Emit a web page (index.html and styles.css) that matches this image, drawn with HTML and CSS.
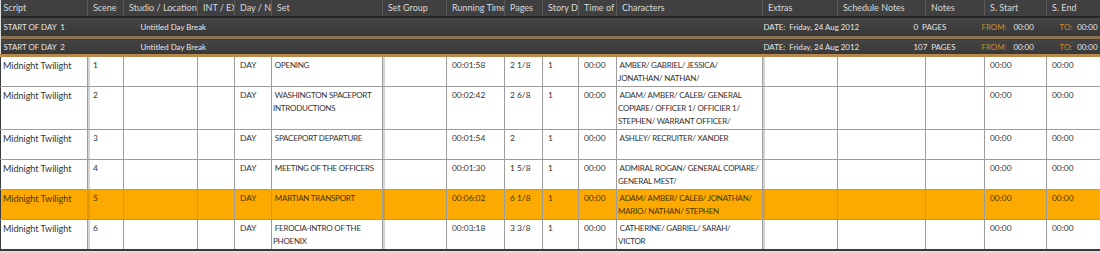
FILE: index.html
```html
<!DOCTYPE html>
<html lang="en">
<head>
    <meta charset="UTF-8">
    <title>Shooting Schedule</title>
    <link rel="stylesheet" href="styles.css">
</head>
<body>
    <table class="grid">
        <colgroup>
            <col style="width:87px"><col style="width:36px"><col style="width:74px"><col style="width:37px">
            <col style="width:37px"><col style="width:111px"><col style="width:64px"><col style="width:58px">
            <col style="width:38px"><col style="width:36px"><col style="width:38px"><col style="width:146px">
            <col style="width:75px"><col style="width:88px"><col style="width:59px"><col style="width:62px">
            <col style="width:54px">
        </colgroup>
        <thead>
            <tr class="head">
                <th class="first">Script</th><th>Scene</th><th>Studio / Location</th><th>INT / EXT</th>
                <th>Day / Night</th><th>Set</th><th>Set Group</th><th>Running Time</th><th>Pages</th>
                <th>Story Day</th><th>Time of Day</th><th>Characters</th><th>Extras</th>
                <th>Schedule Notes</th><th>Notes</th><th>S. Start</th><th>S. End</th>
            </tr>
        </thead>
        <tbody>
            <tr class="daybreak">
                <td colspan="17">
                    <div class="break">
                        <span class="b-title">START OF DAY&nbsp; 1</span>
                        <span class="b-name">Untitled Day Break</span>
                        <span class="b-date">DATE:&nbsp; Friday, 24 Aug 2012</span>
                        <span class="b-pages">0&nbsp; PAGES</span>
                        <span class="b-from"><em>FROM:</em>00:00</span>
                        <span class="b-to"><em>TO:</em>00:00</span>
                    </div>
                </td>
            </tr>
            <tr class="daybreak second">
                <td colspan="17">
                    <div class="break">
                        <span class="b-title">START OF DAY&nbsp; 2</span>
                        <span class="b-name">Untitled Day Break</span>
                        <span class="b-date">DATE:&nbsp; Friday, 24 Aug 2012</span>
                        <span class="b-pages">107&nbsp; PAGES</span>
                        <span class="b-from"><em>FROM:</em>00:00</span>
                        <span class="b-to"><em>TO:</em>00:00</span>
                    </div>
                </td>
            </tr>
            <tr class="scene">
                <td class="first">Midnight Twilight</td><td class="num">1</td><td></td><td></td><td class="num">DAY</td>
                <td class="cap">&nbsp;OPENING</td><td></td><td class="num">00:01:58</td><td class="num">2 1/8</td><td class="num">1</td><td class="num">00:00</td>
                <td class="cap">&nbsp;AMBER/ GABRIEL/ JESSICA/ JONATHAN/ NATHAN/</td>
                <td></td><td></td><td></td><td class="num">00:00</td><td class="num">00:00</td>
            </tr>
            <tr class="scene">
                <td class="first">Midnight Twilight</td><td class="num">2</td><td></td><td></td><td class="num">DAY</td>
                <td class="cap">&nbsp;WASHINGTON SPACEPORT INTRODUCTIONS</td><td></td><td class="num">00:02:42</td><td class="num">2 6/8</td><td class="num">1</td><td class="num">00:00</td>
                <td class="cap">&nbsp;ADAM/ AMBER/ CALEB/ GENERAL COPIARE/ OFFICER 1/ OFFICIER 1/ STEPHEN/ WARRANT OFFICER/</td>
                <td></td><td></td><td></td><td class="num">00:00</td><td class="num">00:00</td>
            </tr>
            <tr class="scene">
                <td class="first">Midnight Twilight</td><td class="num">3</td><td></td><td></td><td class="num">DAY</td>
                <td class="cap">&nbsp;SPACEPORT DEPARTURE</td><td></td><td class="num">00:01:54</td><td class="num">2</td><td class="num">1</td><td class="num">00:00</td>
                <td class="cap">&nbsp;ASHLEY/ RECRUITER/ XANDER</td>
                <td></td><td></td><td></td><td class="num">00:00</td><td class="num">00:00</td>
            </tr>
            <tr class="scene">
                <td class="first">Midnight Twilight</td><td class="num">4</td><td></td><td></td><td class="num">DAY</td>
                <td class="cap">&nbsp;MEETING OF THE OFFICERS</td><td></td><td class="num">00:01:30</td><td class="num">1 5/8</td><td class="num">1</td><td class="num">00:00</td>
                <td class="cap">&nbsp;ADMIRAL ROGAN/ GENERAL COPIARE/ GENERAL MEST/</td>
                <td></td><td></td><td></td><td class="num">00:00</td><td class="num">00:00</td>
            </tr>
            <tr class="scene selected">
                <td class="first">Midnight Twilight</td><td class="num">5</td><td></td><td></td><td class="num">DAY</td>
                <td class="cap">&nbsp;MARTIAN TRANSPORT</td><td></td><td class="num">00:06:02</td><td class="num">6 1/8</td><td class="num">1</td><td class="num">00:00</td>
                <td class="cap">&nbsp;ADAM/ AMBER/ CALEB/ JONATHAN/ MARIO/ NATHAN/ STEPHEN</td>
                <td></td><td></td><td></td><td class="num">00:00</td><td class="num">00:00</td>
            </tr>
            <tr class="scene">
                <td class="first">Midnight Twilight</td><td class="num">6</td><td></td><td></td><td class="num">DAY</td>
                <td class="cap">&nbsp;FEROCIA-INTRO OF THE PHOENIX</td><td></td><td class="num">00:03:18</td><td class="num">3 3/8</td><td class="num">1</td><td class="num">00:00</td>
                <td class="cap">&nbsp;CATHERINE/ GABRIEL/ SARAH/<br>VICTOR</td>
                <td></td><td></td><td></td><td class="num">00:00</td><td class="num">00:00</td>
            </tr>
        </tbody>
    </table>
</body>
</html>
```

FILE: styles.css
```css
body{
    margin: 0;
    background: #dcdcdc;
    font-family: Lato, "Liberation Sans", sans-serif;
    font-size: 9px;
}
.grid{
    width: 1100px;
    border-collapse: collapse;
    table-layout: fixed;
    border-bottom: 2px solid #3a3a3a;
}
.grid th, .grid td{
    overflow: hidden;
    padding: 0;
}

/* header */
.head th{
    height: 15px;
    background: #404040;
    color: #d8d8d8;
    font-weight: normal;
    text-align: left;
    white-space: nowrap;
    padding: 0 2px 1px 5px;
    border-right: 1px solid #5a5a5a;
    border-bottom: 2px solid #262626;
}
.head th.first{
    padding-left: 3px;
}

/* day breaks */
.daybreak td{
    background: linear-gradient(#454545, #383838);
    color: #e6e6e6;
    font-size: 7.9px;
    height: 18px;
    border-bottom: 3px solid #8c7250;
}
.daybreak.second td{
    height: 15px;
    border-bottom: 3px solid #b8894a;
}
.break{
    display: flex;
    align-items: center;
    white-space: nowrap;
}
.break span{
    flex-shrink: 0;
}
.b-title{
    width: 140px;
    padding-left: 3px;
    box-sizing: border-box;
}
.b-name{
    width: 623px;
}
.b-date{
    width: 150px;
}
.b-pages{
    width: 68px;
}
.b-to{
    margin-left: auto;
    padding-right: 3px;
}
.break em{
    font-style: normal;
    color: #c88f2c;
    margin-right: 5px;
}
.b-from em{
    margin-right: 7px;
}

/* scene rows */
.scene td{
    height: 30px;
    background: #fff;
    color: #333;
    vertical-align: top;
    line-height: 13px;
    padding: 2px 2px 1px 5px;
    border-right: 1px solid #9c9c9c;
    border-bottom: 1px solid #9c9c9c;
    box-sizing: border-box;
}
.scene td.first{
    padding-left: 2px;
    border-left: 1px solid #3a3a3a;
}
.scene td.num{
    font-size: 8.4px;
}
.scene td.cap{
    font-size: 8px;
    letter-spacing: -0.25px;
    padding-left: 1px;
    padding-right: 2px;
}
.scene td:nth-child(2), .scene td:nth-child(7), .scene td:nth-child(13){
    box-shadow: inset 2px 0 #d4d4d4;
}
.scene.selected td{
    background: #fdaa00;
    color: #4a3300;
}
.scene.selected td:nth-child(2), .scene.selected td:nth-child(7), .scene.selected td:nth-child(13){
    box-shadow: inset 2px 0 #e29a08;
}
```
